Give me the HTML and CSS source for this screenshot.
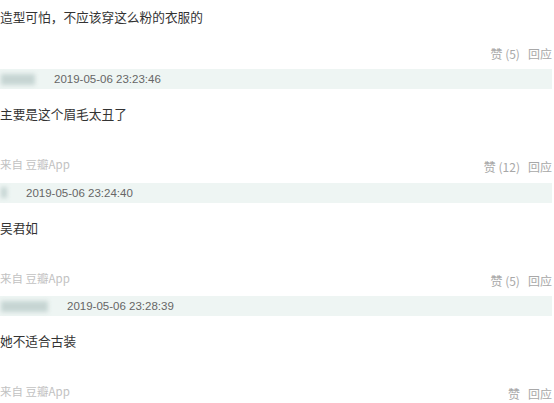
FILE: index.html
```html
<!DOCTYPE html>
<html lang="zh-CN">
<head>
  <meta charset="UTF-8" />
  <meta name="viewport" content="width=device-width, initial-scale=1.0" />
  <title>评论</title>
  <link rel="stylesheet" href="styles.css">
</head>
<body>
  <div class="comments">
    <div class="comment first">
      <p class="content">造型可怕，不应该穿这么粉的衣服的</p>
      <div class="foot">
        <span class="from"></span>
        <span class="actions">赞 (5)&nbsp;&nbsp;&nbsp;回应</span>
      </div>
    </div>

    <div class="comment">
      <div class="meta">
        <span class="name" style="width: 34px"></span>
        <span class="date">2019-05-06 23:23:46</span>
      </div>
      <p class="content">主要是这个眉毛太丑了</p>
      <div class="foot">
        <span class="from">来自 豆瓣App</span>
        <span class="actions">赞 (12)&nbsp;&nbsp;&nbsp;回应</span>
      </div>
    </div>

    <div class="comment">
      <div class="meta">
        <span class="name" style="width: 6px"></span>
        <span class="date">2019-05-06 23:24:40</span>
      </div>
      <p class="content">吴君如</p>
      <div class="foot">
        <span class="from">来自 豆瓣App</span>
        <span class="actions">赞 (5)&nbsp;&nbsp;&nbsp;回应</span>
      </div>
    </div>

    <div class="comment">
      <div class="meta">
        <span class="name" style="width: 47px"></span>
        <span class="date">2019-05-06 23:28:39</span>
      </div>
      <p class="content">她不适合古装</p>
      <div class="foot">
        <span class="from">来自 豆瓣App</span>
        <span class="actions">赞&nbsp;&nbsp;&nbsp;回应</span>
      </div>
    </div>
  </div>
</body>
</html>
```

FILE: styles.css
```css
* {
  margin: 0;
  padding: 0;
  box-sizing: border-box;
}

body {
  font-family: "Liberation Sans", "Noto Sans CJK SC", sans-serif;
  background: #fff;
  overflow: hidden;
}

.comments {
  padding-right: 2px;
}

.comment {
  padding-bottom: 7.5px;
}

.meta {
  height: 20px;
  background: #eef5f3;
  display: flex;
  align-items: center;
  gap: 19px;
}

.meta .name {
  height: 11px;
  margin-left: 1px;
  background: #c6d5d3;
  filter: blur(2px);
}

.meta .date {
  font-size: 11.5px;
  color: #666;
}

.content {
  margin-top: 15px;
  font-size: 12.7px;
  line-height: 20px;
  color: #333;
  font-family: "Noto Sans CJK SC", sans-serif;
}

.foot {
  margin-top: 32px;
  display: flex;
  justify-content: space-between;
  font-size: 11.5px;
  line-height: 16px;
}

.foot .from {
  color: #c2c2c2;
  font-family: "Noto Sans CJK SC", sans-serif;
}

.foot .actions {
  padding-top: 3px;
  font-size: 12px;
  color: #a8a8a8;
  font-family: "Noto Sans CJK SC", sans-serif;
}

.first {
  padding-bottom: 7px;
}

.first .content {
  margin-top: 7px;
}

.first .foot {
  margin-top: 19px;
}

.first .foot .actions {
  padding-top: 0;
}
```
